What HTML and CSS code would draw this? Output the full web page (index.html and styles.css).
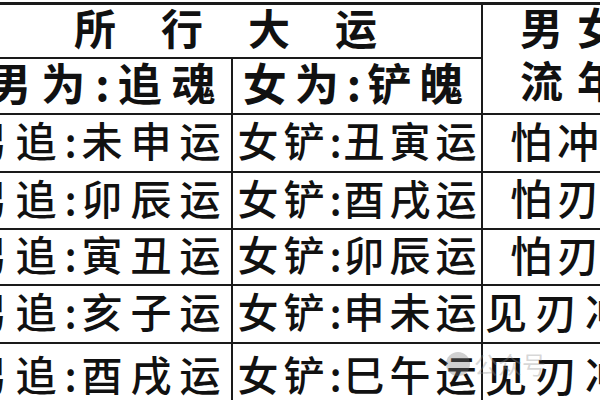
FILE: index.html
```html
<!DOCTYPE html>
<html lang="zh-CN">
<head>
<meta charset="utf-8">
<link rel="stylesheet" href="styles.css">
</head>
<body>
<div class="page">
  <div class="grid">
    <div class="cell title">所行大运</div>
    <div class="cell side"><span>男女</span><span>流年</span></div>
    <div class="cell head">男为<span class="colon">:</span>追魂</div>
    <div class="cell head h2">女为<span class="colon">:</span>铲魄</div>

    <div class="cell c1">男追<span class="colon">:</span>未申运</div>
    <div class="cell c2">女铲<span class="colon">:</span>丑寅运</div>
    <div class="cell c3">怕冲</div>

    <div class="cell c1">男追<span class="colon">:</span>卯辰运</div>
    <div class="cell c2">女铲<span class="colon">:</span>酉戌运</div>
    <div class="cell c3">怕刃</div>

    <div class="cell c1">男追<span class="colon">:</span>寅丑运</div>
    <div class="cell c2">女铲<span class="colon">:</span>卯辰运</div>
    <div class="cell c3">怕刃</div>

    <div class="cell c1">男追<span class="colon">:</span>亥子运</div>
    <div class="cell c2">女铲<span class="colon">:</span>申未运</div>
    <div class="cell c3 wide">见刃冲</div>

    <div class="cell c1">男追<span class="colon">:</span>酉戌运</div>
    <div class="cell c2">女铲<span class="colon">:</span>巳午运</div>
    <div class="cell c3 wide">见刃冲</div>
  </div>
  <div class="mark"><span class="mark-icon"></span>公众号</div>
</div>
</body>
</html>
```

FILE: styles.css
```css
html, body {
  margin: 0;
  padding: 0;
  background: #fff;
}
.page {
  position: relative;
  width: 600px;
  height: 400px;
  overflow: hidden;
  background: #fff;
}
.grid {
  display: grid;
  grid-template-columns: 261px 248px 153px;
  grid-template-rows: 52px 54px 56px 55px 54px 56px 66px;
  gap: 2px;
  background: #1a1a1a;
  margin-left: -30px;
  margin-top: 2px;
  padding-top: 3px;
  width: max-content;
  font-family: "Noto Sans CJK SC", "Noto Sans", sans-serif;
  color: #111;
}
.cell {
  background: #fff;
  display: flex;
  align-items: center;
  justify-content: center;
  font-size: 41px;
  letter-spacing: 7px;
  line-height: 1;
  white-space: nowrap;
  font-weight: 500;
  padding-bottom: 7px;
  padding-left: 3px;
}
.c1 {
  letter-spacing: 8px;
  padding-left: 0;
  padding-right: 6px;
}
.c1 .colon {
  letter-spacing: 5px;
}
.c2 {
  letter-spacing: 5px;
  padding-left: 5px;
}
.c2 .colon {
  letter-spacing: 2px;
}
.title {
  grid-column: 1 / 3;
  font-size: 42px;
  font-weight: 700;
  letter-spacing: 45px;
  padding-left: 45px;
  padding-bottom: 9px;
}
.side {
  grid-row: 1 / 3;
  grid-column: 3;
  flex-direction: column;
  align-items: flex-start;
  justify-content: center;
  gap: 10px;
  padding-left: 37px;
  padding-bottom: 12px;
  font-size: 43px;
  font-weight: 700;
  letter-spacing: 14px;
}
.head {
  font-weight: 700;
  font-size: 44px;
  letter-spacing: 10px;
  padding-left: 12px;
  padding-bottom: 9px;
}
.head .colon {
  letter-spacing: 8px;
}
.head.h2 {
  letter-spacing: 8px;
  padding-left: 0;
}
.head.h2 .colon {
  letter-spacing: 6px;
}
.c3 {
  justify-content: flex-start;
  padding-left: 27px;
  letter-spacing: 5px;
  font-size: 42px;
}
.c3.wide {
  padding-left: 2px;
  letter-spacing: 8px;
}
.mark {
  position: absolute;
  left: 446px;
  top: 346px;
  display: flex;
  align-items: center;
  gap: 4px;
  font-family: "Noto Sans CJK SC", sans-serif;
  font-size: 24px;
  color: rgba(140, 140, 140, 0.35);
}
.mark-icon {
  width: 24px;
  height: 24px;
  border-radius: 50%;
  background: rgba(120, 120, 120, 0.35);
}
```
